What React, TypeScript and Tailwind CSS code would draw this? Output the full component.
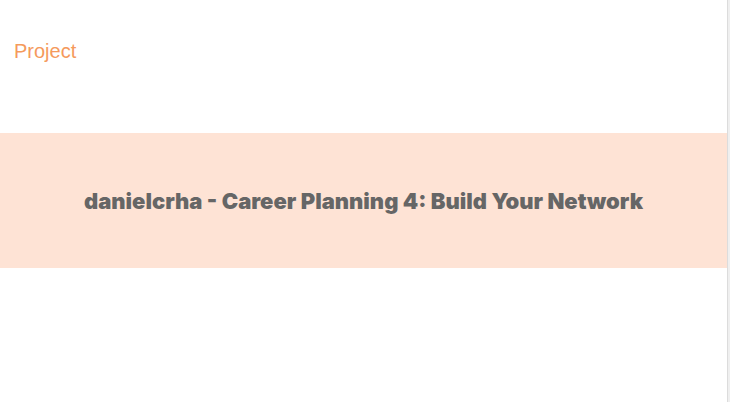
export default function App() {
  return (
    <div className="flex h-[402px] w-[730px] bg-white">
      <div className="flex-1">
        <div className="h-[133px] pl-[14px] pt-[39px]">
          <span className="text-[20px] leading-[24px] text-[#f59a5c]" style={{ fontFamily: '"Liberation Sans", Arial, sans-serif' }}>
            Project
          </span>
        </div>
        <div className="flex h-[135px] items-center justify-center bg-[#fee3d5]">
          <h1
            className="text-[22px] font-black leading-[24px] text-[#666666]"
            style={{ fontFamily: 'Inter, "Noto Sans", sans-serif' }}
          >
            danielcrha - Career Planning 4: Build Your Network
          </h1>
        </div>
      </div>
      <div className="h-[402px] w-[3px] border-l border-[#dcdcdc] bg-[#efefef]" />
    </div>
  );
}
